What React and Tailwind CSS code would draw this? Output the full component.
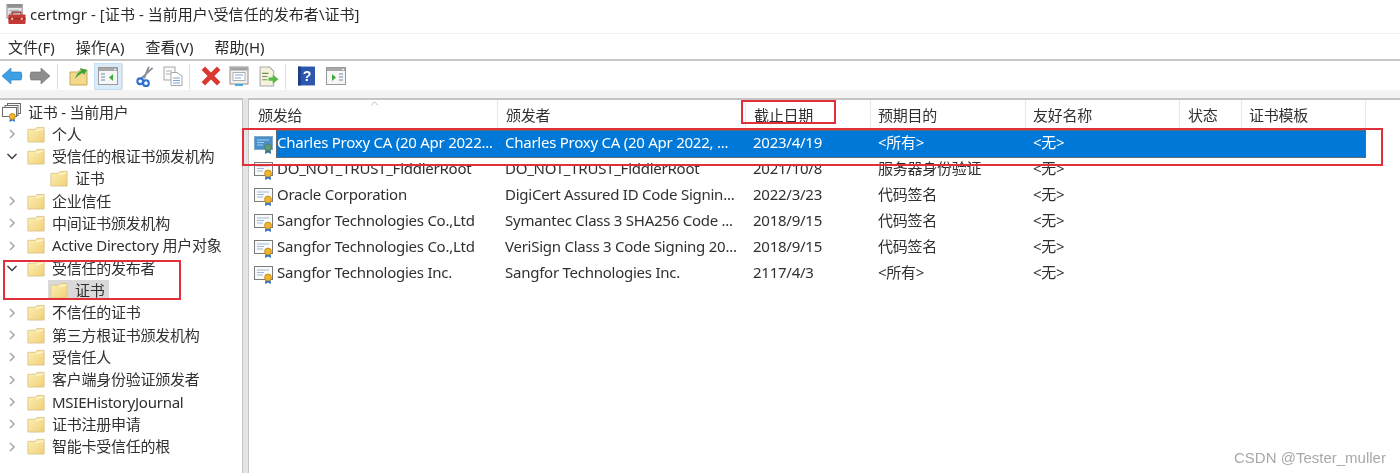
const Folder = ({ className = "" }) => (
  <svg viewBox="0 0 20 18" preserveAspectRatio="none" className={`w-[18px] h-[17px] shrink-0 ${className}`}>
    <defs>
      <linearGradient id="fg" x1="0" y1="0" x2="1" y2="1">
        <stop offset="0" stopColor="#fdf0b8" />
        <stop offset="1" stopColor="#f0cf74" />
      </linearGradient>
    </defs>
    <path d="M1 3.5 L1 17 L19 17 L19 1.5 L11 1.5 L9 3.5 L2 3.5 Z" fill="url(#fg)" stroke="#dcc78c" strokeWidth="1" />
    <path d="M10 5 L18 3" stroke="#fff6d2" strokeWidth="1.4" fill="none" />
  </svg>
);

const Chevron = ({ open }) => (
  <svg viewBox="0 0 12 12" className="w-[12px] h-[12px] shrink-0">
    {open ? (
      <path d="M1.5 4 L6 8.5 L10.5 4" fill="none" stroke="#404040" strokeWidth="1.5" />
    ) : (
      <path d="M4 2 L8 6 L4 10" fill="none" stroke="#a6a6a6" strokeWidth="1.5" />
    )}
  </svg>
);

const Cert = ({ selected }) => (
  <svg viewBox="0 0 21 21" className="w-[21px] h-[21px] shrink-0">
    <rect x="0.5" y="2.5" width="18" height="13" fill={selected ? "#4a90c8" : "#fafafa"} stroke={selected ? "#7fa8c8" : "#7b7b7b"} />
    <path d="M3 6 H15 M3 8.5 H10 M3 11 H9" stroke={selected ? "#a8d0ee" : "#9db8d8"} strokeWidth="1" />
    <path d="M11.5 15 L11 20 L14 18.5 L17 20 L16.5 15 Z" fill={selected ? "#2f6f9f" : "#2f6fc0"} />
    <circle cx="14" cy="13.5" r="3.4" fill={selected ? "#5f9a78" : "#eeb530"} stroke={selected ? "#4b8064" : "#c98f18"} />
  </svg>
);

const RootIcon = () => (
  <svg viewBox="0 0 20 20" className="w-[20px] h-[20px] shrink-0">
    <rect x="5.5" y="1.5" width="13" height="10" fill="#f6f6f6" stroke="#6b6b6b" />
    <rect x="3" y="3.5" width="13" height="10" fill="#fafafa" stroke="#6b6b6b" />
    <rect x="0.5" y="5.5" width="14" height="9" fill="#fff" stroke="#6b6b6b" />
    <path d="M8 16 L7.5 20 L10.5 18.5 L13 20 L12.5 16 Z" fill="#2f6fc0" />
    <circle cx="10.3" cy="14.5" r="3" fill="#eeb530" stroke="#c98f18" />
  </svg>
);

const Tb = ({ className = "", children }) => (
  <div className={`w-[28px] h-[26px] flex items-center justify-center shrink-0 ${className}`}>{children}</div>
);
const Sep = ({ className = "" }) => <div className={`w-px h-[25px] bg-[#dcdcdc] shrink-0 ${className}`} />;

const WinPane = ({ arrowRight }) => (
  <svg viewBox="0 0 20 18" className="w-[20px] h-[18px]">
    <rect x="0.5" y="0.5" width="19" height="17" fill="#f6f6f6" stroke="#9a9a9a" />
    <rect x="1" y="1" width="18" height="3" fill="#a8a8a8" />
    <rect x="16" y="1.8" width="2" height="1.4" fill="#eee" />
    {arrowRight ? (
      <>
        <path d="M6 7 L6 14 L10 10.5 Z" fill="#3cae3c" />
        <path d="M13 7 H17 M13 10 H17 M13 13 H17" stroke="#9aaec4" strokeWidth="1.6" />
      </>
    ) : (
      <>
        <path d="M3 7 H7 M3 10 H7 M3 13 H7" stroke="#9aaec4" strokeWidth="1.6" />
        <path d="M15 7 L15 14 L11 10.5 Z" fill="#3cae3c" />
      </>
    )}
  </svg>
);

const treeRows = [
  { label: "个人", c: 1 },
  { label: "受信任的根证书颁发机构", o: 1 },
  { label: "证书", k: 1 },
  { label: "企业信任", c: 1 },
  { label: "中间证书颁发机构", c: 1 },
  { label: "Active Directory 用户对象", c: 1 },
  { label: "受信任的发布者", o: 1 },
  { label: "证书", k: 1, s: 1 },
  { label: "不信任的证书", c: 1 },
  { label: "第三方根证书颁发机构", c: 1 },
  { label: "受信任人", c: 1 },
  { label: "客户端身份验证颁发者", c: 1 },
  { label: "MSIEHistoryJournal", c: 1 },
  { label: "证书注册申请", c: 1 },
  { label: "智能卡受信任的根", c: 1 },
];

const cols = [
  ["颁发给", "w-[249px]", "pl-[9px]"],
  ["颁发者", "w-[248px]", "pl-[8px]"],
  ["截止日期", "w-[125px]", "pl-[8px]"],
  ["预期目的", "w-[155px]", "pl-[7px]"],
  ["友好名称", "w-[154px]", "pl-[7px]"],
  ["状态", "w-[62px]", "pl-[8px]"],
  ["证书模板", "w-[124px]", "pl-[7px]"],
];

const rows = [
  ["Charles Proxy CA (20 Apr 2022...", "Charles Proxy CA (20 Apr 2022, ...", "2023/4/19", "<所有>", "<无>"],
  ["DO_NOT_TRUST_FiddlerRoot", "DO_NOT_TRUST_FiddlerRoot", "2021/10/8", "服务器身份验证", "<无>"],
  ["Oracle Corporation", "DigiCert Assured ID Code Signin...", "2022/3/23", "代码签名", "<无>"],
  ["Sangfor Technologies Co.,Ltd", "Symantec Class 3 SHA256 Code ...", "2018/9/15", "代码签名", "<无>"],
  ["Sangfor Technologies Co.,Ltd", "VeriSign Class 3 Code Signing 20...", "2018/9/15", "代码签名", "<无>"],
  ["Sangfor Technologies Inc.", "Sangfor Technologies Inc.", "2117/4/3", "<所有>", "<无>"],
];

export default function App() {
  return (
    <div className="relative w-[1400px] h-[473px] overflow-hidden bg-white flex flex-col text-[15px] leading-none tracking-[-0.25px] text-[#303030] font-['Noto_Sans','Noto_Sans_CJK_SC',sans-serif] blur-[0.4px]">
      {/* Title */}
      <div className="h-[34px] flex items-center shrink-0 pl-[6px] pb-[5px] border-b border-[#f0f0f0]">
        <svg viewBox="0 0 21 22" className="w-[21px] h-[21px] shrink-0">
          <rect x="0.5" y="0.5" width="16" height="14" fill="#e4e4e4" stroke="#8c8c8c" />
          <rect x="1" y="1" width="15" height="3" fill="#8f8f8f" />
          <path d="M3 7 H13 M3 10 H13" stroke="#a8a8a8" />
          <rect x="2" y="11" width="18" height="10" rx="1" fill="#c23a33" />
          <path d="M6 11 V8.5 H15 V11" fill="none" stroke="#8e2320" strokeWidth="1.2" />
          <path d="M2 15.5 H20" stroke="#8e2320" />
          <rect x="5" y="14.5" width="2" height="2" fill="#f0d0c0" />
          <rect x="15" y="14.5" width="2" height="2" fill="#f0d0c0" />
        </svg>
        <span className="ml-[3px] text-[15px] tracking-[0.05px] text-[#2a2a2a] whitespace-nowrap">certmgr - [证书 - 当前用户\受信任的发布者\证书]</span>
      </div>
      {/* Menu */}
      <div className="h-[27px] flex items-center shrink-0 pl-[8px] pt-[2px] gap-[21px] border-b-2 border-[#c8c8c8] tracking-normal text-[#2a2a2a]">
        <span>文件(F)</span>
        <span>操作(A)</span>
        <span>查看(V)</span>
        <span>帮助(H)</span>
      </div>
      {/* Toolbar */}
      <div className="h-[29px] flex items-center shrink-0 pt-[1px]">
        <Tb className="-ml-[2px]">
          <svg viewBox="0 0 22 18" className="w-[22px] h-[18px]">
            <path d="M1 9 L10 1 V5 H20 Q22 9 20 13 H10 V17 Z" fill="#3d9fe6" stroke="#2a78b8" strokeWidth="0.6" />
          </svg>
        </Tb>
        <Tb>
          <svg viewBox="0 0 22 18" className="w-[22px] h-[18px]">
            <path d="M21 9 L12 1 V5 H2 Q0 9 2 13 H12 V17 Z" fill="#8d8d8d" stroke="#6d6d6d" strokeWidth="0.6" />
          </svg>
        </Tb>
        <Sep className="ml-[3px]" />
        <Tb className="ml-[7px]">
          <svg viewBox="0 0 20 20" className="w-[20px] h-[20px]">
            <path d="M1 6 H9 L11 4 H18 V19 H1 Z" fill="#f2d98c" stroke="#c7a95a" />
            <path d="M6 13 Q8 6 12 5 L11 2 L18 4 L15 9 L14 7 Q10 8 6 13 Z" fill="#3aa53a" />
          </svg>
        </Tb>
        <Tb className="ml-[1px] !h-[27px] bg-[#d9ebf9] border border-[#c5dff5]">
          <WinPane />
        </Tb>
        <Sep />
        <Tb className="ml-[8px]">
          <svg viewBox="0 0 20 22" className="w-[20px] h-[21px]">
            <path d="M14 1 L9 13 M18 2 L6 13" stroke="#8a9098" strokeWidth="2" fill="none" />
            <circle cx="5" cy="16" r="3" fill="none" stroke="#2f6fd0" strokeWidth="2.2" />
            <circle cx="11" cy="18" r="3" fill="none" stroke="#2f6fd0" strokeWidth="2.2" />
          </svg>
        </Tb>
        <Tb>
          <svg viewBox="0 0 20 20" className="w-[20px] h-[20px]">
            <rect x="1" y="1" width="11" height="13" fill="#fafafa" stroke="#a8a8a8" />
            <path d="M3 5 H9 M3 8 H9" stroke="#b0b0b0" />
            <path d="M8 6.5 H14 L19 10 V19.5 H8 Z" fill="#fff" stroke="#a8a8a8" />
            <path d="M10 12 H17 M10 14.5 H17 M10 17 H17" stroke="#7ea6d4" />
          </svg>
        </Tb>
        <Sep className="ml-[2px]" />
        <Tb className="ml-[7px]">
          <svg viewBox="0 0 20 20" className="w-[22px] h-[22px]">
            <path d="M3 3 L17 17 M17 3 L3 17" stroke="#d83a32" strokeWidth="4.4" />
          </svg>
        </Tb>
        <Tb>
          <svg viewBox="0 0 20 20" className="w-[20px] h-[22px]">
            <rect x="1" y="1" width="18" height="17" fill="#f2f2f2" stroke="#8e8e8e" />
            <rect x="1.5" y="1.5" width="17" height="3" fill="#a0a0a0" />
            <rect x="4" y="6.5" width="12" height="8" fill="#fff" stroke="#b0b0b0" />
            <path d="M6 9 H14 M6 12 H12" stroke="#7ea6d4" />
            <rect x="6" y="18" width="8" height="2" fill="#4aa8e0" />
          </svg>
        </Tb>
        <Tb className="ml-[1px]">
          <svg viewBox="0 0 20 20" className="w-[21px] h-[21px]">
            <path d="M2 1 H11 L15 5 V19 H2 Z" fill="#f6f3dc" stroke="#a8a8a8" />
            <path d="M4 7 H10 M4 10 H9 M4 13 H9" stroke="#6d8a5a" />
            <path d="M10 11 H14 V8 L19.5 12.5 L14 17 V14 H10 Z" fill="#55b847" />
          </svg>
        </Tb>
        <Sep className="ml-[3px]" />
        <Tb className="ml-[6px]">
          <svg viewBox="0 0 18 20" className="w-[17px] h-[20px]">
            <rect x="0" y="0" width="18" height="20" fill="#2b58ae" />
            <rect x="0" y="0" width="3" height="20" fill="#1d3f86" />
            <text x="9.5" y="15.5" textAnchor="middle" fontSize="15" fontWeight="700" fill="#fff" fontFamily="Liberation Sans">?</text>
          </svg>
        </Tb>
        <Tb className="ml-[2px]">
          <WinPane arrowRight />
        </Tb>
      </div>
      <div className="h-[8px] shrink-0 bg-[#f3f3f3]" />
      {/* Panes */}
      <div className="flex-1 flex min-h-0 bg-[#e4e4e4]">
        <div className="w-[243px] shrink-0 bg-white border-t-2 border-r border-[#c4c4c4] pt-[1px] overflow-hidden">
          <div className="h-[22px] flex items-center pl-[2px]">
            <RootIcon />
            <span className="ml-[6px]">证书 - 当前用户</span>
          </div>
          {treeRows.map((r, i) => (
            <div key={i} className="h-[22.33px] flex items-center whitespace-nowrap">
              {r.k ? (
                <div className={`ml-[48px] h-[20px] flex items-center pl-[2px] pr-[4px] ${r.s ? "bg-[#d9d9d9]" : ""}`}>
                  <Folder />
                  <span className="ml-[7px]">{r.label}</span>
                </div>
              ) : (
                <>
                  <div className="ml-[6px] w-[12px] flex justify-center">
                    <Chevron open={r.o} />
                  </div>
                  <Folder className="ml-[9px]" />
                  <span className="ml-[7px]">{r.label}</span>
                </>
              )}
            </div>
          ))}
        </div>
        <div className="w-[5px] shrink-0" />
        <div className="flex-1 bg-white border-t-2 border-l border-[#c4c4c4] relative min-w-0">
          <div className="h-[31px] flex">
            {cols.map(([t, w, p], i) => (
              <div key={i} className={`${w} ${p} flex items-center border-r border-[#e8e8e8] shrink-0`}>{t}</div>
            ))}
          </div>
          <svg viewBox="0 0 10 6" className="absolute left-[121px] top-[1px] w-[9px] h-[5px]">
            <path d="M1 5 L5 1 L9 5" fill="none" stroke="#b0b0b0" strokeWidth="1" />
          </svg>
          <div>
            {rows.map((r, i) => (
              <div key={i} className="h-[26px] flex items-center whitespace-nowrap">
                <div className="w-[28px] pl-[5px] shrink-0">
                  <Cert selected={i === 0} />
                </div>
                <div className={`flex h-full items-center w-[1088px] shrink-0 pb-[4px] ${i === 0 ? "bg-[#0078d7] text-white outline outline-[#5f6b75]" : ""}`}>
                  <div className="w-[221px] shrink-0">{r[0]}</div>
                  <div className="w-[248px] shrink-0 pl-[7px]">{r[1]}</div>
                  <div className="w-[125px] shrink-0 pl-[7px]">{r[2]}</div>
                  <div className="w-[155px] shrink-0 pl-[7px]">{r[3]}</div>
                  <div className="w-[154px] shrink-0 pl-[7px]">{r[4]}</div>
                </div>
              </div>
            ))}
          </div>
        </div>
      </div>
      {/* Annotations */}
      <div className="absolute left-[242px] top-[128px] w-[1141px] h-[38px] border-[2px] border-[#e0303a]" />
      <div className="absolute left-[741px] top-[100px] w-[95px] h-[24px] border-[2px] border-[#e0303a]" />
      <div className="absolute left-[3px] top-[260px] w-[178px] h-[40px] border-[2px] border-[#e0303a]" />
      <div className="absolute left-[1234px] top-[450px] text-[15px] leading-none tracking-normal text-[#a8a8a8] font-['Liberation_Sans',sans-serif] whitespace-nowrap">CSDN @Tester_muller</div>
    </div>
  );
}
